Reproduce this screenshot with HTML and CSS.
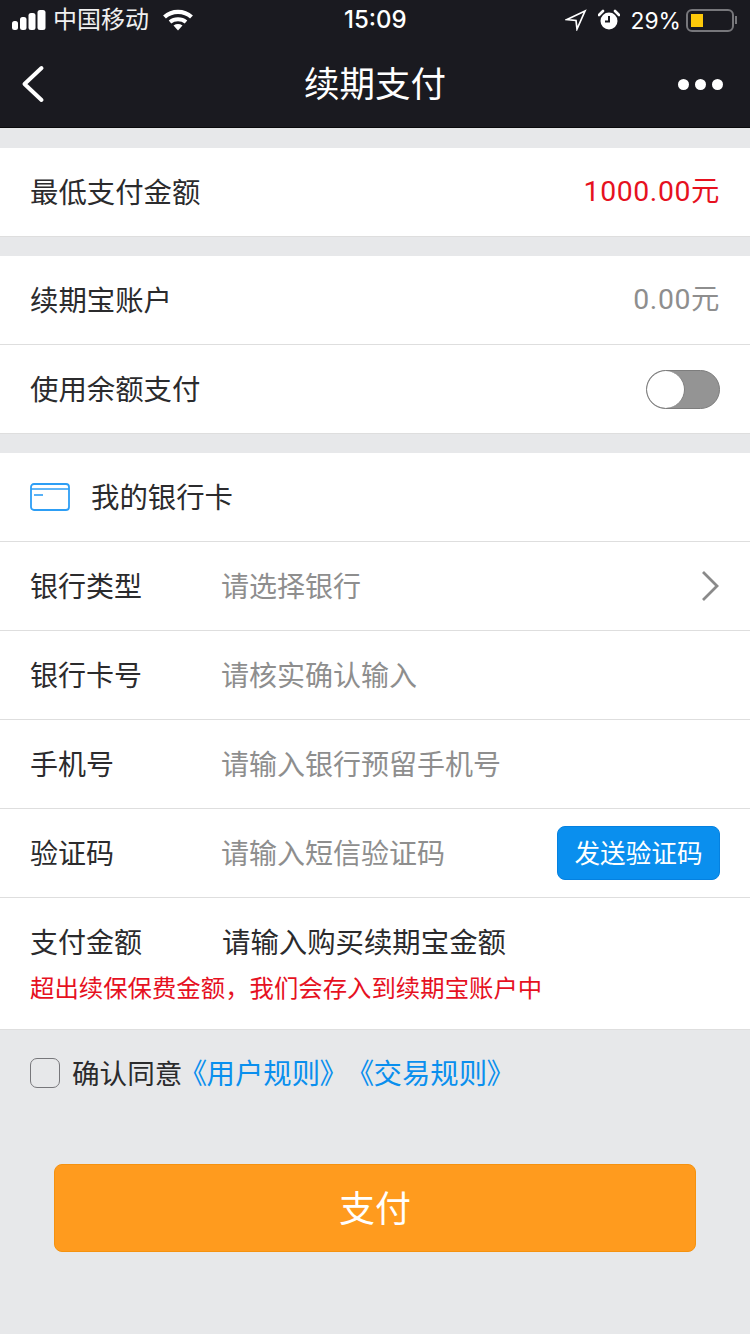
FILE: index.html
```html
<!DOCTYPE html>
<html lang="en">
<head>
  <meta charset="utf-8">
  <title>续期支付</title>
  <link rel="stylesheet" href="styles.css">
</head>
<body>

<!-- Status bar -->
<header class="top">
  <div class="status">
    <div class="status-left">
      <svg class="signal" width="34" height="20" viewBox="0 0 34 20">
        <rect x="0" y="11" width="6" height="9" rx="2.5" fill="#fff"/>
        <rect x="8" y="7" width="6.5" height="13" rx="2.5" fill="#fff"/>
        <rect x="16.5" y="3" width="7" height="17" rx="2.5" fill="#fff"/>
        <rect x="25.5" y="0" width="8" height="20" rx="2.5" fill="#fff"/>
      </svg>
      <span class="carrier">中国移动</span>
      <svg class="wifi" width="30" height="22" viewBox="0 0 30 22">
        <path d="M1.5 8C9 1.2 21 1.2 28.5 8" fill="none" stroke="#fff" stroke-width="4.2"/>
        <path d="M7 13C11.5 9.4 18.5 9.4 23 13" fill="none" stroke="#fff" stroke-width="4"/>
        <path d="M10.5 16.5C13.5 14.6 16.5 14.6 19.5 16.5L15 21.5Z" fill="#fff"/>
      </svg>
    </div>
    <div class="clock">15:09</div>
    <div class="status-right">
      <svg width="22" height="22" viewBox="0 0 22 22">
        <path d="M20 2L2 10.5L11 11.5L12 20Z" fill="none" stroke="#fff" stroke-width="1.7" stroke-linejoin="miter"/>
      </svg>
      <svg class="alarm" width="22" height="22" viewBox="0 0 22 22">
        <circle cx="11" cy="12" r="8.5" fill="#fff"/>
        <path d="M11 7V12.5H7" fill="none" stroke="#1a1a20" stroke-width="2"/>
        <path d="M1 6L5 2M21 6L17 2" stroke="#fff" stroke-width="2.6" stroke-linecap="round"/>
      </svg>
      <span class="percent">29%</span>
      <div class="battery"><div class="battery-level"></div></div>
      <div class="battery-tip"></div>
    </div>
  </div>

  <!-- Nav bar -->
  <nav class="nav">
    <svg class="back" width="24" height="38" viewBox="0 0 24 38">
      <path d="M20.5 3L3.5 19L20.5 35" fill="none" stroke="#fff" stroke-width="4" stroke-linecap="round" stroke-linejoin="round"/>
    </svg>
    <h1 class="nav-title">续期支付</h1>
    <div class="more"><i></i><i></i><i></i></div>
  </nav>
</header>

<section class="group">
  <div class="row">
    <span class="label">最低支付金额</span>
    <span class="amount red">1000.00元</span>
  </div>
</section>

<section class="group">
  <div class="row">
    <span class="label">续期宝账户</span>
    <span class="amount grey">0.00元</span>
  </div>
  <div class="row">
    <span class="label">使用余额支付</span>
    <div class="switch"><div class="knob"></div></div>
  </div>
</section>

<section class="group">
  <div class="row card-head">
    <svg width="40" height="28" viewBox="0 0 40 28">
      <rect x="1" y="1" width="38" height="26" rx="3" fill="none" stroke="#2d9ef5" stroke-width="1.8"/>
      <path d="M1 6H39" stroke="#2d9ef5" stroke-width="1.4"/>
      <path d="M4 12H13" stroke="#2d9ef5" stroke-width="1.6"/>
    </svg>
    <span class="label">我的银行卡</span>
  </div>
  <div class="row">
    <span class="label field-name">银行类型</span>
    <span class="hint">请选择银行</span>
    <svg class="chevron" width="20" height="32" viewBox="0 0 20 32">
      <path d="M3 2L17 16L3 30" fill="none" stroke="#8a8a8a" stroke-width="2.8"/>
    </svg>
  </div>
  <div class="row">
    <span class="label field-name">银行卡号</span>
    <span class="hint">请核实确认输入</span>
  </div>
  <div class="row">
    <span class="label field-name">手机号</span>
    <span class="hint">请输入银行预留手机号</span>
  </div>
  <div class="row">
    <span class="label field-name">验证码</span>
    <span class="hint">请输入短信验证码</span>
    <button class="send-btn">发送验证码</button>
  </div>
  <div class="pay-block">
    <div class="pay-line">
      <span class="label field-name">支付金额</span>
      <span class="label">请输入购买续期宝金额</span>
    </div>
    <p class="warn">超出续保保费金额，我们会存入到续期宝账户中</p>
  </div>
</section>

<div class="agree">
  <div class="check"></div>
  <span class="label agree-text">确认同意</span>
  <div class="rules">
    <span>《用户规则》</span>
    <span>《交易规则》</span>
  </div>
</div>

<div class="pay-wrap">
  <button class="pay-btn">支付</button>
</div>

</body>
</html>
```

FILE: styles.css
```css
* {
  box-sizing: border-box;
}
body {
  margin: 0;
  height: 1334px;
  overflow: hidden;
  background: #e7e8ea;
  color: #2b2b2d;
  font-family: "Noto Sans CJK SC", sans-serif;
  font-size: 28px;
}
.top {
  height: 128px;
  background: #1a1a20;
  border-bottom: 1px solid #0a0a0c;
  color: #fff;
}
.status {
  height: 40px;
  padding: 0 12px;
  display: flex;
  justify-content: space-between;
  align-items: center;
  position: relative;
}
.status-left, .status-right {
  display: flex;
  align-items: center;
}
.carrier {
  font-size: 24px;
  line-height: 30px;
  margin: 0 0 4px 7px;
  color: #f0f0f0;
}
.wifi {
  margin-left: 14px;
}
.clock {
  position: absolute;
  left: 344px;
  top: 5px;
  font-family: Inter, sans-serif;
  font-size: 24px;
  font-weight: 500;
  line-height: 30px;
}
.alarm {
  margin-left: 11px;
}
.percent {
  font-family: Inter, sans-serif;
  font-size: 22.8px;
  margin-left: 11px;
}
.battery {
  width: 48px;
  height: 23px;
  margin-left: 5px;
  padding: 3px;
  border: 2px solid #77777b;
  border-radius: 6px;
}
.battery-level {
  width: 12px;
  height: 100%;
  background: #fdc90a;
}
.battery-tip {
  width: 2px;
  height: 8px;
  margin-left: 1px;
  margin-right: 1px;
  background: #77777b;
}
.nav {
  height: 87px;
  padding: 0 27px 0 21px;
  display: flex;
  justify-content: space-between;
  align-items: center;
  position: relative;
}
.nav-title {
  position: absolute;
  left: 0;
  right: 0;
  margin: -4px 0 0;
  text-align: center;
  font-size: 35.5px;
  font-weight: normal;
  line-height: 50px;
}
.more {
  display: flex;
  gap: 6px;
  margin-top: 2px;
}
.more i {
  width: 11px;
  height: 11px;
  border-radius: 50%;
  background: #fff;
}
.group {
  margin-top: 19px;
  background: #fff;
  border-bottom: 1px solid #dedede;
}
.top + .group {
  margin-top: 20px;
}
.row {
  height: 89px;
  padding: 0 30px;
  display: flex;
  align-items: center;
  border-bottom: 1px solid #dedede;
}
.row:last-child {
  height: 88px;
  border-bottom: none;
}
.label {
  font-size: 28.4px;
  color: #2b2b2d;
  line-height: 40px;
  margin-bottom: 2px;
}
.amount {
  margin-left: auto;
  font-family: Roboto, "Noto Sans CJK SC", sans-serif;
  font-size: 28.4px;
  letter-spacing: 0.6px;
  line-height: 40px;
}
.red {
  color: #e6111f;
}
.grey {
  color: #8e8e8e;
}
.switch {
  margin-left: auto;
  width: 74px;
  height: 39px;
  border-radius: 20px;
  background: #949494;
  border: 1px solid #7d7d7d;
  overflow: hidden;
}
.knob {
  width: 38px;
  height: 37px;
  border-radius: 50%;
  background: #fff;
  border-right: 1px solid #7d7d7d;
}
.card-head {
  gap: 21px;
}
.field-name {
  flex: 0 0 192px;
  font-size: 28px;
}
.hint {
  font-size: 28px;
  color: #8e8e8e;
  white-space: nowrap;
  line-height: 40px;
  margin: 0 0 2px -1px;
}
.chevron {
  margin-left: auto;
}
.send-btn {
  margin-left: auto;
  width: 163px;
  height: 54px;
  padding: 0 0 3px;
  border: 1px solid #0581e0;
  border-radius: 8px;
  background: #0a8fee;
  color: #fff;
  font-family: inherit;
  font-size: 25.6px;
}
.pay-block {
  height: 131px;
  padding: 24px 30px 0;
}
.pay-line {
  display: flex;
  align-items: center;
  height: 40px;
}
.warn {
  margin: 7px 0 0;
  font-size: 24.4px;
  line-height: 36px;
  color: #e6111f;
  white-space: nowrap;
}
.agree {
  height: 87px;
  padding: 0 0 2px 30px;
  display: flex;
  align-items: center;
}
.check {
  width: 30px;
  height: 30px;
  margin-right: 12px;
  border: 1px solid #77777b;
  border-radius: 7px;
}
.agree-text {
  font-size: 27.6px;
}
.rules {
  display: flex;
  gap: 25px;
  margin: 0 0 2px 10px;
  font-size: 28.4px;
  color: #0a8fee;
  white-space: nowrap;
  line-height: 40px;
  font-feature-settings: "palt";
}
.pay-wrap {
  padding: 47px 54px 0;
}
.pay-btn {
  display: block;
  width: 100%;
  height: 88px;
  padding: 0 0 4px;
  border: 1px solid #f5920f;
  border-radius: 8px;
  background: #ff9b1e;
  color: #fff;
  font-family: inherit;
  font-size: 36px;
}
```
